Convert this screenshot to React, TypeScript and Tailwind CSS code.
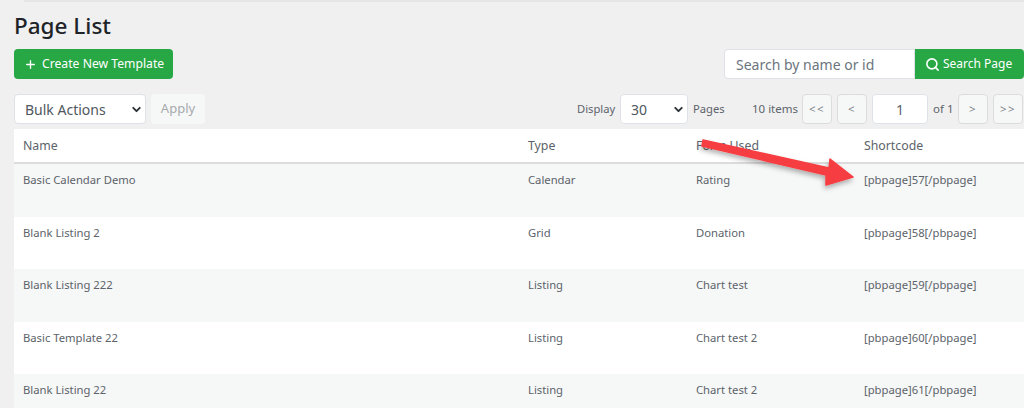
import { Search, Plus, ChevronDown } from "lucide-react";

const rows = [
  { name: "Basic Calendar Demo", type: "Calendar", form: "Rating", code: "[pbpage]57[/pbpage]" },
  { name: "Blank Listing 2", type: "Grid", form: "Donation", code: "[pbpage]58[/pbpage]" },
  { name: "Blank Listing 222", type: "Listing", form: "Chart test", code: "[pbpage]59[/pbpage]" },
  { name: "Basic Template 22", type: "Listing", form: "Chart test 2", code: "[pbpage]60[/pbpage]" },
  { name: "Blank Listing 22", type: "Listing", form: "Chart test 2", code: "[pbpage]61[/pbpage]" },
];

function FakeSelect({ label, className }: { label: string; className: string }) {
  return (
    <div
      className={`flex h-[30px] items-center justify-between rounded border border-[#dee2e6] bg-white text-[14px] text-[#50575e] ${className}`}
    >
      <span>{label}</span>
      <ChevronDown className="size-[13px] text-[#2c3338]" strokeWidth={3.5} />
    </div>
  );
}

function PageButton({ label }: { label: string }) {
  return (
    <div className="flex h-[30px] w-[30px] items-center justify-center rounded border border-[#dcdcde] bg-[#f6f7f7] text-[11.5px] tracking-[1.5px] text-[#7b8187]">
      {label}
    </div>
  );
}

export default function App() {
  return (
    <div className="relative h-[408px] w-[1024px] overflow-hidden bg-[#f0f0f1] font-['Noto_Sans',sans-serif] text-[#5c636a]">
      <div className="ml-[24px] h-[2px] bg-[#e6e6e7]" />

      <div className="pl-[14px]">
        <h1 className="mt-[8px] h-[39px] text-[22.5px] leading-[32px] font-medium text-[#1d2327]">Page List</h1>

        <div className="flex items-start justify-between">
          <div className="flex h-[30px] w-[159px] items-center gap-[5px] rounded bg-[#28a745] pl-[10px] text-[12.2px] text-white">
            <Plus className="size-[13px]" strokeWidth={2.5} />
            Create New Template
          </div>
          <div className="flex">
            <div className="flex h-[30px] w-[191px] items-center rounded-l border border-[#dee2e6] bg-white pl-[11px] text-[14px] text-[#6c757d]">
              Search by name or id
            </div>
            <div className="flex h-[30px] w-[109px] items-center gap-[3px] rounded-r bg-[#28a745] pl-[10px] text-[12px] text-white">
              <Search className="size-[15px]" strokeWidth={2.5} />
              Search Page
            </div>
          </div>
        </div>

        <div className="mt-[15px] flex h-[30px] items-center justify-between pr-[1px]">
          <div className="flex items-center gap-[5px]">
            <FakeSelect label="Bulk Actions" className="w-[132px] pr-[2px] pl-[10px]" />
            <div className="flex h-[30px] w-[54px] items-center justify-center rounded bg-[#f6f7f7] text-[13px] text-[#a7aaad]">
              Apply
            </div>
          </div>
          <div className="flex items-center text-[11.2px]">
            <span className="w-[43px]">Display</span>
            <FakeSelect label="30" className="w-[68px] pr-[2px] pl-[10px]" />
            <span className="ml-[5px] w-[59px]">Pages</span>
            <span className="w-[50px] text-[11.5px] whitespace-nowrap">10 items</span>
            <div className="flex items-center gap-[5px]">
              <PageButton label="<<" />
              <PageButton label="<" />
            </div>
            <div className="ml-[5px] flex h-[30px] w-[56px] items-center justify-center rounded border border-[#dee2e6] bg-white text-[14px]">
              1
            </div>
            <span className="ml-[5px] w-[25px] text-[11.5px] whitespace-nowrap">of 1</span>
            <div className="flex items-center gap-[5px]">
              <PageButton label=">" />
              <PageButton label=">>" />
            </div>
          </div>
        </div>

        <div className="mt-[5px] bg-white">
          <div className="grid h-[35px] grid-cols-[505px_168px_168px_1fr] items-center border-b-2 border-[#dcdcde] pt-[2px] pl-[9px] text-[12.3px]">
            <span>Name</span>
            <span>Type</span>
            <span>Form Used</span>
            <span>Shortcode</span>
          </div>
          {rows.map((row, i) => (
            <div
              key={row.code}
              className={`grid h-[52.6px] grid-cols-[505px_168px_168px_1fr] pt-[8px] pl-[9px] text-[11.25px] leading-[16px] ${
                i % 2 === 0 ? "bg-[#f6f7f7]" : "bg-white"
              }`}
            >
              <span>{row.name}</span>
              <span>{row.type}</span>
              <span>{row.form}</span>
              <span>{row.code}</span>
            </div>
          ))}
        </div>
      </div>

      {/* annotation arrow over the table */}
      <svg className="absolute top-0 left-0" width="1024" height="408" viewBox="0 0 1024 408">
        <defs>
          <filter id="arrow-shadow" x="-20%" y="-40%" width="140%" height="200%">
            <feDropShadow dx="-1" dy="3" stdDeviation="2.5" floodColor="#000" floodOpacity="0.3" />
          </filter>
        </defs>
        <polygon
          points="703,140 829,168 830,159 853,177 826,185 826,175 702,146"
          fill="#f63e42"
          stroke="#f63e42"
          strokeWidth="1.5"
          strokeLinejoin="round"
          filter="url(#arrow-shadow)"
        />
      </svg>
    </div>
  );
}
